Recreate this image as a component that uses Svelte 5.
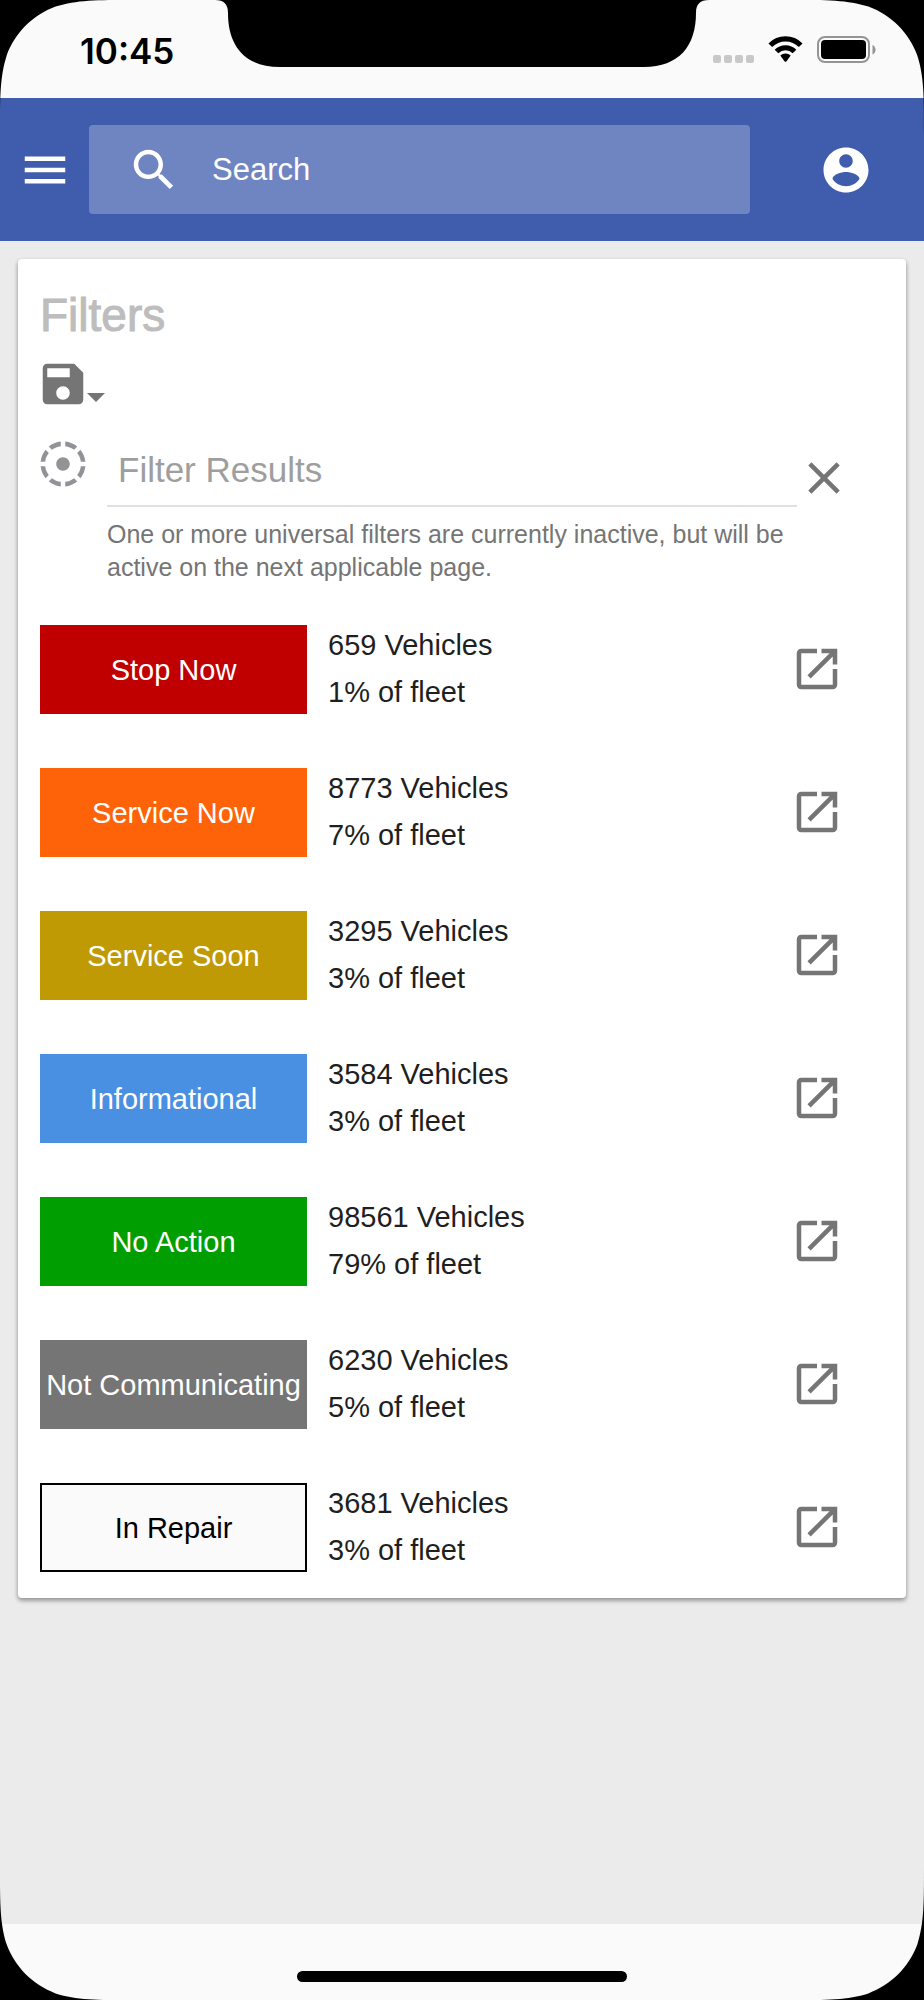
<script>
	const CORNERS = ['top-left', 'top-right', 'bottom-right', 'bottom-left'];

	const ICONS = {
		menu: 'M3 18h18v-2H3v2zm0-5h18v-2H3v2zm0-7v2h18V6H3z',
		search:
			'M15.5 14h-.79l-.28-.27C15.41 12.59 16 11.11 16 9.5 16 5.91 13.09 3 9.5 3S3 5.91 3 9.5 5.91 16 9.5 16c1.61 0 3.09-.59 4.23-1.57l.27.28v.79l5 4.99L20.49 19l-4.99-5zm-6 0C7.01 14 5 11.99 5 9.5S7.01 5 9.5 5 14 7.01 14 9.5 11.99 14 9.5 14z',
		account:
			'M12 2C6.48 2 2 6.48 2 12s4.48 10 10 10 10-4.48 10-10S17.52 2 12 2zm0 3c1.66 0 3 1.34 3 3s-1.34 3-3 3-3-1.34-3-3 1.34-3 3-3zm0 14.2c-2.5 0-4.71-1.28-6-3.22.03-1.99 4-3.08 6-3.08 1.99 0 5.97 1.09 6 3.08-1.29 1.94-3.5 3.22-6 3.22z',
		save: 'M17 3H5c-1.11 0-2 .9-2 2v14c0 1.1.89 2 2 2h14c1.1 0 2-.9 2-2V7l-4-4zm-5 16c-1.66 0-3-1.34-3-3s1.34-3 3-3 3 1.34 3 3-1.34 3-3 3zm3-10H5V5h10v4z',
		target:
			'M11 4.07V2.05c-2.01.2-3.84 1-5.32 2.21L7.1 5.69c1.11-.86 2.44-1.44 3.9-1.62zm7.32.19C16.84 3.05 15.01 2.25 13 2.05v2.02c1.46.18 2.79.76 3.9 1.62l1.42-1.43zM19.93 11h2.02c-.2-2.01-1-3.84-2.21-5.32L18.31 7.1c.86 1.11 1.44 2.44 1.62 3.9zM5.69 7.1L4.26 5.68C3.05 7.16 2.25 8.99 2.05 11h2.02c.18-1.46.76-2.79 1.62-3.9zM4.07 13H2.05c.2 2.01 1 3.84 2.21 5.32l1.43-1.43c-.86-1.1-1.44-2.43-1.62-3.89zM15 12c0-1.66-1.34-3-3-3s-3 1.34-3 3 1.34 3 3 3 3-1.34 3-3zm3.31 4.9l1.43 1.43c1.21-1.48 2.01-3.32 2.21-5.32h-2.02c-.18 1.45-.76 2.78-1.62 3.89zM13 19.93v2.02c2.01-.2 3.84-1 5.32-2.21l-1.43-1.43c-1.1.86-2.43 1.44-3.89 1.62zm-7.32-.19C7.16 20.95 9 21.75 11 21.95v-2.02c-1.46-.18-2.79-.76-3.9-1.62l-1.42 1.43z',
		close:
			'M19 6.41L17.59 5 12 10.59 6.41 5 5 6.41 10.59 12 5 17.59 6.41 19 12 13.41 17.59 19 19 17.59 13.41 12z',
		open: 'M19 19H5V5h7V3H5c-1.11 0-2 .9-2 2v14c0 1.1.89 2 2 2h14c1.1 0 2-.9 2-2v-7h-2v7zM14 3v2h3.59l-9.83 9.83 1.41 1.41L19 6.41V10h2V3h-7z'
	};

	const statuses = [
		{ id: 'stop-now', label: 'Stop Now', vehicles: 659, percent: 1 },
		{ id: 'service-now', label: 'Service Now', vehicles: 8773, percent: 7 },
		{ id: 'service-soon', label: 'Service Soon', vehicles: 3295, percent: 3 },
		{ id: 'informational', label: 'Informational', vehicles: 3584, percent: 3 },
		{ id: 'no-action', label: 'No Action', vehicles: 98561, percent: 79 },
		{ id: 'not-communicating', label: 'Not Communicating', vehicles: 6230, percent: 5 },
		{ id: 'in-repair', label: 'In Repair', vehicles: 3681, percent: 3 }
	];

	let query = $state('');
	let filterText = $state('');
</script>

{#snippet icon(name)}
	<svg class="icon" viewBox="0 0 24 24" aria-hidden="true"><path d={ICONS[name]} /></svg>
{/snippet}

<div class="device">
	<div class="status-bar">
		<time class="clock">10:45</time>
		<svg class="notch" viewBox="0 0 494 67" aria-hidden="true">
			<path d="M0 0C9 0 13 4 13 13C13 46 30 67 65 67H429C464 67 481 46 481 13C481 4 485 0 494 0Z" />
		</svg>
		<div class="indicators">
			<svg width="41" height="8" viewBox="0 0 41 8" fill="#c8c8c8" aria-hidden="true">
				<rect width="8" height="8" rx="2" />
				<rect x="11" width="8" height="8" rx="2" />
				<rect x="22" width="8" height="8" rx="2" />
				<rect x="33" width="8" height="8" rx="2" />
			</svg>
			<svg width="35" height="27" viewBox="0 0 35 27" aria-hidden="true">
				<path
					d="M2.3 9.2A21.3 21.3 0 0 1 32.7 9.2M8.5 15.5A12.7 12.7 0 0 1 26.5 15.5"
					fill="none"
					stroke="#000"
					stroke-width="5.2"
				/>
				<path d="M12.3 19.6A7.3 7.3 0 0 1 22.7 19.6L18.5 25.3Q17.5 26.4 16.5 25.3Z" />
			</svg>
			<svg width="60" height="27" viewBox="0 0 60 27" aria-hidden="true">
				<rect x="1" y="1" width="51" height="25" rx="7" fill="none" stroke="#949494" stroke-width="2" />
				<rect x="4" y="4" width="45" height="19" rx="4" />
				<path d="M55.5 9C59.5 10.5 59.5 17 55.5 18.5Z" fill="#949494" />
			</svg>
		</div>
	</div>

	<header class="toolbar">
		<button class="icon-button" type="button" aria-label="Menu">{@render icon('menu')}</button>
		<label class="search">
			{@render icon('search')}
			<input type="text" placeholder="Search" aria-label="Search" bind:value={query} />
		</label>
		<button class="icon-button" type="button" aria-label="Account">{@render icon('account')}</button>
	</header>

	<main>
		<section class="card">
			<h2>Filters</h2>

			<button class="save" type="button" aria-label="Save filters">
				{@render icon('save')}
				<svg class="caret" viewBox="0 0 18 9" aria-hidden="true"><path d="M0 0h18L9 9z" /></svg>
			</button>

			<div class="filter">
				<button class="icon-button target" type="button" aria-label="Universal filters">
					{@render icon('target')}
				</button>
				<input
					type="text"
					placeholder="Filter Results"
					aria-label="Filter Results"
					aria-describedby="filter-hint"
					bind:value={filterText}
				/>
				<button class="icon-button clear" type="button" aria-label="Clear" onclick={() => (filterText = '')}>
					{@render icon('close')}
				</button>
				<p id="filter-hint" class="hint">
					One or more universal filters are currently inactive, but will be active on the next
					applicable page.
				</p>
			</div>

			<ul class="statuses">
				{#each statuses as status (status.id)}
					<li>
						<button class="status {status.id}" type="button">{status.label}</button>
						<p class="counts">
							<span>{status.vehicles} Vehicles</span>
							<span>{status.percent}% of fleet</span>
						</p>
						<a class="open" href="#{status.id}" aria-label="Open {status.label}">
							{@render icon('open')}
						</a>
					</li>
				{/each}
			</ul>
		</section>
	</main>

	<footer><div class="home-indicator"></div></footer>

	<!-- rounded display corners -->
	{#each CORNERS as corner (corner)}
		<svg class="corner {corner}" viewBox="0 0 152 152" aria-hidden="true">
			<path d="M0 152C0 109 0 87 7.5 63.1C17 37.3 37.3 17 63.1 7.5C87 0 109 0 152 0H0Z" />
		</svg>
	{/each}
</div>

<style>
	:global(body) {
		margin: 0;
	}

	.device {
		position: relative;
		display: flex;
		flex-direction: column;
		min-height: 100vh;
		overflow: hidden;
		background: #fafafa;
		color: #1f1f1f;
		font-family: 'Liberation Sans', Arial, sans-serif;
	}

	button,
	input {
		margin: 0;
		padding: 0;
		border: 0;
		background: none;
		color: inherit;
		font: inherit;
	}

	button {
		cursor: pointer;
	}

	input {
		min-width: 0;
		outline: none;
	}

	.icon {
		display: block;
		flex: none;
		width: 54px;
		height: 54px;
		fill: currentColor;
	}

	.icon-button {
		flex: none;
	}

	/* Status bar */
	.status-bar {
		display: grid;
		grid-template-columns: 1fr auto 1fr;
		height: 98px;
	}

	.clock {
		padding: 29px 0 0 80px;
		color: #000;
		font-family: Inter, sans-serif;
		font-size: 35px;
		font-weight: 600;
		line-height: 44px;
	}

	.notch {
		width: 494px;
		height: 67px;
	}

	.indicators {
		display: flex;
		justify-content: flex-end;
		align-items: flex-end;
		gap: 14px;
		height: 63px;
		padding-right: 47px;
	}

	.indicators svg {
		flex: none;
	}

	/* Toolbar */
	.toolbar {
		display: flex;
		align-items: center;
		padding: 27px 51px 27px 18px;
		background: #3f5cad;
		color: #fff;
	}

	.search {
		display: flex;
		flex: 1;
		align-items: center;
		gap: 31px;
		height: 89px;
		margin: 0 69px 0 17px;
		padding: 0 38px;
		border-radius: 4px;
		background: rgba(255, 255, 255, 0.25);
	}

	.search input {
		flex: 1;
		font-size: 31px;
		line-height: 36px;
	}

	.search input::placeholder {
		color: #fff;
		opacity: 1;
	}

	/* Card */
	main {
		flex: 1;
		padding: 18px;
		background: #ebebeb;
	}

	.card {
		padding: 29px 18px 24px;
		border-radius: 4px;
		background: #fff;
		box-shadow:
			0 2px 4px rgba(0, 0, 0, 0.28),
			0 3px 5px rgba(0, 0, 0, 0.16);
	}

	h2 {
		margin: 0 4px 15px;
		color: #bdbdbd;
		font-size: 46px;
		font-weight: 400;
		line-height: 54px;
		-webkit-text-stroke: 1px currentColor;
	}

	.save {
		display: flex;
		align-items: flex-end;
		color: #757575;
	}

	.caret {
		width: 18px;
		height: 9px;
		padding-bottom: 9px;
		margin-left: -3px;
		fill: currentColor;
	}

	.filter {
		display: grid;
		grid-template-columns: 54px 1fr 54px;
		margin: 22px 37px 0 0;
	}

	.filter input {
		height: 74px;
		margin-left: 17px;
		padding: 2px 11px 0;
		border-bottom: 2px solid #e0e0e0;
		box-sizing: border-box;
		font-size: 35px;
	}

	.filter input::placeholder {
		color: #9e9e9e;
		opacity: 1;
	}

	.target {
		align-self: start;
		padding-top: 4px;
		color: #929297;
	}

	.clear {
		align-self: end;
		padding-bottom: 2px;
		color: #757575;
	}

	.hint {
		grid-column: 2;
		margin: 11px 0 0 17px;
		color: #757575;
		font-size: 25px;
		line-height: 33px;
	}

	/* Status rows */
	.statuses {
		display: flex;
		flex-direction: column;
		gap: 49px;
		margin: 38px 0 0;
		padding: 0 44px 0 4px;
		list-style: none;
		font-size: 29px;
	}

	.statuses li {
		display: flex;
		align-items: center;
	}

	.status {
		flex: none;
		width: 267px;
		height: 89px;
		padding-top: 3px;
		color: #fff;
		white-space: nowrap;
	}

	.stop-now {
		background: #c00000;
	}

	.service-now {
		background: #ff6309;
	}

	.service-soon {
		background: #c09a04;
	}

	.informational {
		background: #4a90e2;
	}

	.no-action {
		background: #009e00;
	}

	.not-communicating {
		background: #757575;
	}

	.in-repair {
		border: 2px solid #000;
		background: #fafafa;
		color: #000;
	}

	.counts {
		display: flex;
		flex: 1;
		flex-direction: column;
		margin: 0 0 0 21px;
		line-height: 47px;
	}

	.open {
		color: #757575;
	}

	/* Home area */
	footer {
		display: flex;
		justify-content: center;
		align-items: flex-end;
		height: 76px;
		padding-bottom: 18px;
		box-sizing: border-box;
	}

	.home-indicator {
		width: 330px;
		height: 11px;
		border-radius: 6px;
		background: #000;
	}

	.corner {
		position: absolute;
		width: 134px;
		height: 134px;
		pointer-events: none;
	}

	.top-left {
		top: 0;
		left: 0;
	}

	.top-right {
		top: 0;
		right: 0;
		transform: rotate(90deg);
	}

	.bottom-right {
		right: 0;
		bottom: 0;
		transform: rotate(180deg);
	}

	.bottom-left {
		bottom: 0;
		left: 0;
		transform: rotate(270deg);
	}
</style>
